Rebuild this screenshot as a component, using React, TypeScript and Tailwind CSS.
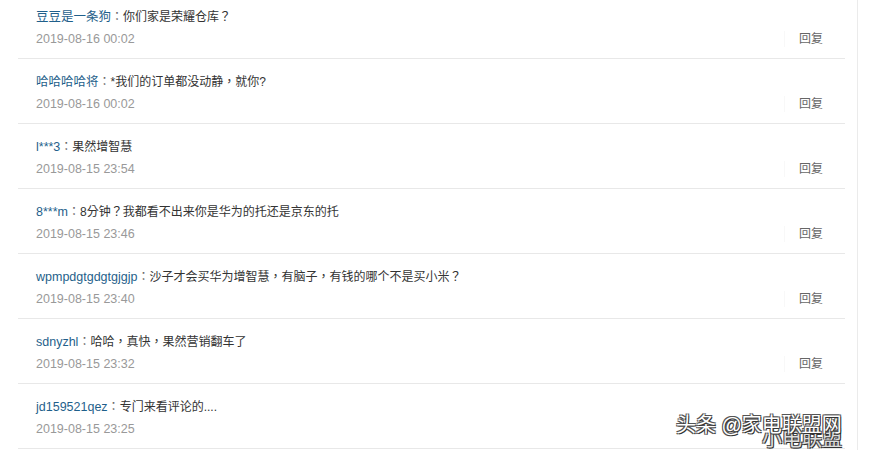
const comments = [
  { user: "豆豆是一条狗", text: "你们家是荣耀仓库？", time: "2019-08-16 00:02" },
  { user: "哈哈哈哈将", text: "*我们的订单都没动静，就你?", time: "2019-08-16 00:02" },
  { user: "l***3", text: "果然增智慧", time: "2019-08-15 23:54" },
  { user: "8***m", text: "8分钟？我都看不出来你是华为的托还是京东的托", time: "2019-08-15 23:46" },
  { user: "wpmpdgtgdgtgjgjp", text: "沙子才会买华为增智慧，有脑子，有钱的哪个不是买小米？", time: "2019-08-15 23:40" },
  { user: "sdnyzhl", text: "哈哈，真快，果然营销翻车了", time: "2019-08-15 23:32" },
  { user: "jd159521qez", text: "专门来看评论的....", time: "2019-08-15 23:25", noReply: true },
];

export default function App() {
  return (
    <div
      className="relative w-[869px] h-[450px] overflow-hidden bg-white"
      style={{ fontFamily: '"Liberation Sans", "Noto Sans CJK TC", sans-serif' }}
    >
      <div className="flex h-full">
        <div className="w-[857px] pl-[18px] pr-[12px] -mt-[6px]">
          {comments.map((c, i) => (
            <div key={i} className="h-[65px] border-b border-[#e8e8e8] flex items-start">
              <div className="flex-1 pl-[18px] pt-[13px]">
                <div className="text-[12px] leading-[20px] text-[#333]">
                  <span className="text-[12.5px] text-[#1f5f8b]">{c.user}</span>
                  <span className="text-[#666]">：</span>
                  {c.text}
                </div>
                <div className="text-[12.5px] leading-[20px] mt-[2px] text-[#999]">{c.time}</div>
              </div>
              {!c.noReply && (
                <div className="mt-[36px] mr-[22px] h-[18px] flex items-center">
                  <div className="w-px h-[16px] bg-[#f8f8f8] mr-[14px]" />
                  <span className="text-[12px] text-[#666]">回复</span>
                </div>
              )}
            </div>
          ))}
        </div>
        <div className="w-px bg-[#ebebeb] h-full" />
      </div>

      {/* watermark */}
      <div className="absolute left-[676px] top-[412px] text-[20px] leading-[26px] whitespace-nowrap text-white [text-shadow:1px_1px_0_#333,-1px_-1px_0_#555,1px_-1px_0_#555,-1px_1px_0_#555]">
        <span className="absolute left-[86px] top-[14px] text-[#ddd]">小电联盟</span>
        <span className="relative">头条 @家电联盟网</span>
      </div>
    </div>
  );
}
